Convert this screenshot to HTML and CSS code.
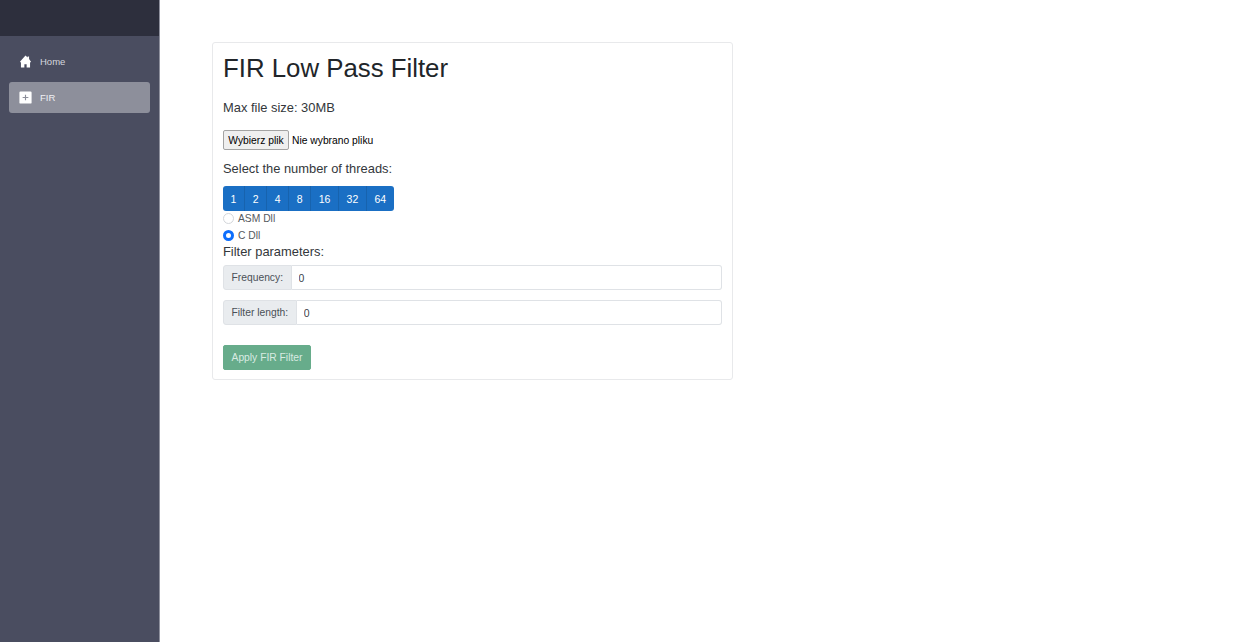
FILE: index.html
```html
<!DOCTYPE html>
<html lang="en">

<head>
	<meta charset="UTF-8">
	<meta name="viewport" content="width=device-width, initial-scale=1.0">
	<title>FIR Low Pass Filter</title>
	<link rel="stylesheet" href="styles.css">
</head>

<body>
	<div class="container">
		<div class="sidebar">
			<div class="sidebar-top"></div>
			<div class="nav">
				<a class="nav-item">
					<svg class="nav-icon" viewBox="0 0 16 16">
						<path d="M8 0.5 L10.6 3 V1.8 H12.4 V5 L14.6 8 V9 H13.6 V15.5 H9.4 V11.5 H6.6 V15.5 H2.4 V9 H1.4 V8 Z" fill="#fff" />
					</svg>
					<span>Home</span>
				</a>
				<a class="nav-item active">
					<svg class="nav-icon" viewBox="0 0 16 16">
						<rect x="0.5" y="0.5" width="15" height="15" rx="1.5" fill="#fff" />
						<path d="M8 4.5 V11.5 M4.5 8 H11.5" stroke="#8d8f9b" stroke-width="1.4" />
					</svg>
					<span>FIR</span>
				</a>
			</div>
		</div>

		<div class="content">
			<div class="card">
				<h1 class="title">FIR Low Pass Filter</h1>
				<p class="text max-size">Max file size: 30MB</p>

				<div class="file-row">
					<button class="file-button">Wybierz plik</button>
					<span>Nie wybrano pliku</span>
				</div>

				<p class="text threads-label">Select the number of threads:</p>

				<div class="button-group">
					<button class="thread-button">1</button>
					<button class="thread-button">2</button>
					<button class="thread-button">4</button>
					<button class="thread-button">8</button>
					<button class="thread-button">16</button>
					<button class="thread-button">32</button>
					<button class="thread-button">64</button>
				</div>

				<label class="radio-row">
					<input type="radio" name="dll" class="radio-input">
					<span>ASM Dll</span>
				</label>
				<label class="radio-row">
					<input type="radio" name="dll" class="radio-input" checked>
					<span>C Dll</span>
				</label>

				<p class="text params-label">Filter parameters:</p>

				<div class="input-group">
					<span class="input-label">Frequency:</span>
					<input class="input-field" type="text" value="0">
				</div>
				<div class="input-group">
					<span class="input-label">Filter length:</span>
					<input class="input-field" type="text" value="0">
				</div>

				<button class="apply-button">Apply FIR Filter</button>
			</div>
		</div>
	</div>
</body>

</html>
```

FILE: styles.css
```css
* {
	box-sizing: border-box;
}

body {
	margin: 0;
	font-family: "Liberation Sans", Arial, sans-serif;
	color: #212529;
	background-color: #fff;
}

.container {
	display: flex;
	height: 642px;
	overflow: hidden;
}

.sidebar {
	width: 160px;
	flex-shrink: 0;
	background-color: #4a4d60;
	border-right: 1px solid #8f919e;
}

.sidebar-top {
	height: 36px;
	background-color: #2d2f3d;
}

.nav {
	display: flex;
	flex-direction: column;
	gap: 5px;
	padding: 10px 9px 0 9px;
}

.nav-item {
	display: flex;
	align-items: center;
	height: 31px;
	padding-left: 10px;
	border-radius: 3px;
	color: #d5d6de;
	font-size: 9.5px;
}

.nav-item.active {
	background-color: #8d8f9b;
	color: #f0f0f4;
}

.nav-icon {
	width: 13px;
	height: 13px;
	margin-right: 8px;
}

.content {
	flex-grow: 1;
	padding: 42px 0 0 52px;
}

.card {
	width: 521px;
	padding: 10px 10px 9px 10px;
	border: 1px solid #e8e9eb;
	border-radius: 3px;
	display: flex;
	flex-direction: column;
	align-items: flex-start;
}

.title {
	margin: 0;
	font-size: 25.8px;
	font-weight: 400;
	line-height: 30px;
}

.text {
	margin: 0;
	font-size: 12.9px;
	line-height: 17px;
	color: #33373b;
}

.max-size {
	margin-top: 16px;
}

.file-row {
	display: flex;
	align-items: center;
	gap: 3px;
	margin-top: 14px;
	font-size: 10.3px;
	color: #000;
}

.file-button {
	width: 66px;
	height: 20px;
	padding: 0;
	font-family: inherit;
	font-size: 10.3px;
	color: #000;
	background-color: #efefef;
	border: 1px solid #a3a3a3;
	border-radius: 2px;
}

.threads-label {
	margin-top: 10px;
}

.button-group {
	display: flex;
	margin-top: 9px;
	height: 25px;
	border-radius: 3px;
	overflow: hidden;
}

.thread-button {
	height: 25px;
	padding: 0 7.6px;
	font-family: inherit;
	font-size: 10.5px;
	color: #fff;
	background-color: #1a6fc4;
	border: 0;
	border-right: 1px solid #1763ae;
}

.thread-button:last-child {
	border-right: 0;
}

.radio-row {
	display: flex;
	align-items: center;
	height: 15px;
	margin-bottom: 2px;
	font-size: 10.3px;
	color: #555a60;
}

.radio-input {
	appearance: none;
	width: 11px;
	height: 11px;
	margin: 0 4px 0 0;
	background-color: #fff;
	border: 1px solid #d3d6da;
	border-radius: 50%;
}

.radio-input:checked {
	border: 3px solid #0d6efd;
}

.params-label {
	margin-top: -2px;
	line-height: 18px;
}

.input-group {
	display: flex;
	width: 100%;
	height: 25px;
	margin-top: 4px;
	margin-bottom: 6px;
}

.input-label {
	display: flex;
	align-items: center;
	padding: 0 7.5px;
	font-size: 10.3px;
	color: #495057;
	background-color: #e9ecef;
	border: 1px solid #dfe2e6;
	border-radius: 3px 0 0 3px;
}

.input-field {
	flex-grow: 1;
	min-width: 0;
	height: 25px;
	padding: 0 7px;
	font-family: inherit;
	font-size: 10.5px;
	color: #3c4248;
	border: 1px solid #dfe2e6;
	border-left: 0;
	border-radius: 0 3px 3px 0;
}

.apply-button {
	margin-top: 14px;
	width: 88px;
	height: 25px;
	padding: 0;
	font-family: inherit;
	font-size: 10.3px;
	color: #d9ebe2;
	background-color: #67ac8b;
	border: 1px solid #67ac8b;
	border-radius: 2px;
}
```
